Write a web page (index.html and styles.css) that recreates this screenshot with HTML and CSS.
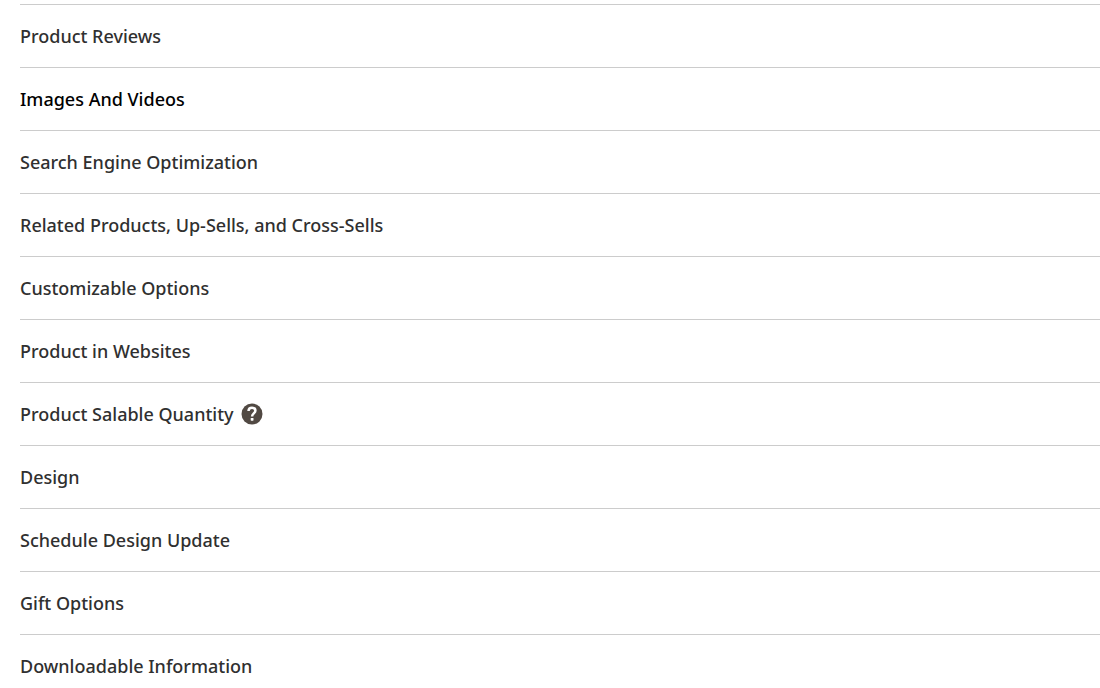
FILE: index.html
```html
<!DOCTYPE html>
<html lang="en">
<head>
    <meta charset="UTF-8">
    <meta name="viewport" content="width=device-width, initial-scale=1.0">
    <title>Product</title>
    <link rel="stylesheet" href="styles.css">
</head>
<body>
    <main class="sections">
        <button type="button" class="section">Product Reviews</button>
        <button type="button" class="section active">Images And Videos</button>
        <button type="button" class="section">Search Engine Optimization</button>
        <button type="button" class="section">Related Products, Up-Sells, and Cross-Sells</button>
        <button type="button" class="section">Customizable Options</button>
        <button type="button" class="section">Product in Websites</button>
        <button type="button" class="section">
            Product Salable Quantity
            <svg class="help" viewBox="0 0 22 22" aria-hidden="true">
                <circle cx="11" cy="11" r="10.5" fill="#514943"/>
                <path d="M7.5 8C7.6 5.9 9 4.8 11 4.8c2.1 0 3.4 1.1 3.4 2.9 0 2.6-3.3 2.9-3.3 5.7" fill="none" stroke="#fff" stroke-width="2.5"/>
                <rect x="9.7" y="15" width="2.8" height="2.7" rx="0.6" fill="#fff"/>
            </svg>
        </button>
        <button type="button" class="section">Design</button>
        <button type="button" class="section">Schedule Design Update</button>
        <button type="button" class="section">Gift Options</button>
        <button type="button" class="section">Downloadable Information</button>
    </main>
</body>
</html>
```
FILE: styles.css
```css
body {
    margin: 0;
    background-color: #fff;
    font-family: "Noto Sans", "Open Sans", sans-serif;
}
.sections {
    display: flex;
    flex-direction: column;
    padding: 4px 0 0 20px;
}
.section {
    display: flex;
    align-items: center;
    gap: 7px;
    padding: 19px 0;
    border: none;
    border-top: 1px solid #ccc;
    background: none;
    color: #303030;
    font-family: inherit;
    font-size: 18px;
    font-weight: 500;
    line-height: 24px;
    text-align: left;
    cursor: pointer;
}
.active {
    color: #000;
}
.help {
    width: 22px;
    height: 22px;
}
```
